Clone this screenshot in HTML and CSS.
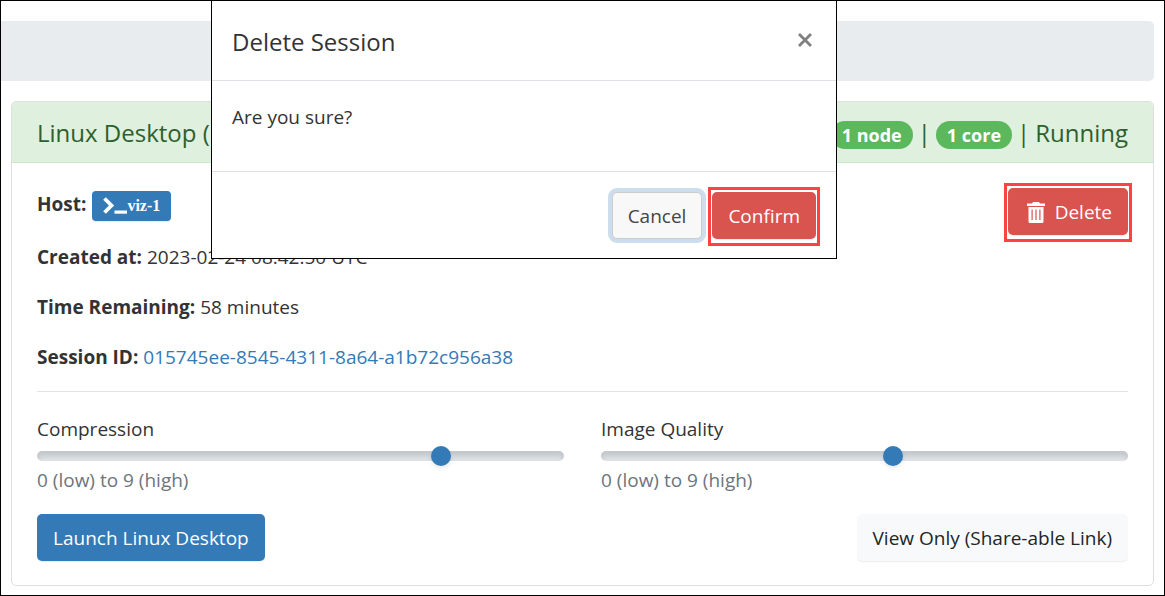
FILE: index.html
```html
<!DOCTYPE html>
<html lang="en">
<head>
<meta charset="utf-8">
<meta name="viewport" content="width=device-width, initial-scale=1">
<title>My Interactive Sessions</title>
<link rel="stylesheet" href="styles.css">
</head>
<body>
<main class="page">
  <nav class="breadcrumb" aria-label="Breadcrumb"></nav>
  <section class="card">
    <header class="card-header">
      <h2 class="card-title">Linux Desktop (</h2>
      <div class="card-status">
        <span class="badge">1 node</span>
        <span>|</span>
        <span class="badge">1 core</span>
        <span>|</span>
        <span>Running</span>
      </div>
    </header>
    <div class="card-body">
      <div class="session">
        <div class="details">
          <p class="host"><strong>Host:</strong>
            <a class="btn btn-primary btn-host" href="#"><svg class="icon-terminal" viewBox="0 0 24 18" aria-hidden="true"><path d="M1.500 1.500 8.500 8.500 1.500 15.500" fill="none" stroke="currentColor" stroke-width="3.800"/><path d="M11.500 13.500H24v3.200H11.500z" fill="currentColor"/></svg>viz-1</a>
          </p>
          <p><strong>Created at:</strong> 2023-02-24 08:42:50 UTC</p>
          <p><strong>Time Remaining:</strong> 58 minutes</p>
          <p><strong>Session ID:</strong> <a class="link" href="#">015745ee-8545-4311-8a64-a1b72c956a38</a></p>
        </div>
        <button class="btn btn-danger marked btn-delete" type="button"><svg class="icon-trash" viewBox="0 0 18 21" aria-hidden="true"><path d="M6 0h6l1 1.500h5V4H0V1.500h5z" fill="currentColor"/><path fill-rule="evenodd" d="M1.500 5h15v14.500q0 1.500-1.500 1.500H3q-1.500 0-1.500-1.500zM4.500 7.500v10.500h1.200V7.500zM8.400 7.500v10.500h1.200V7.500zM12.300 7.500v10.500h1.200V7.500z" fill="currentColor"/></svg>Delete</button>
      </div>
      <form class="settings">
        <div class="field">
          <label for="compression">Compression</label>
          <input class="range" id="compression" type="range" min="0" max="9" value="7">
          <small class="help">0 (low) to 9 (high)</small>
        </div>
        <div class="field">
          <label for="quality">Image Quality</label>
          <input class="range" id="quality" type="range" min="0" max="9" value="5">
          <small class="help">0 (low) to 9 (high)</small>
        </div>
      </form>
      <div class="actions">
        <button class="btn btn-primary" type="button">Launch Linux Desktop</button>
        <a class="btn btn-light" href="#">View Only (Share-able Link)</a>
      </div>
    </div>
  </section>
</main>
<div class="modal" role="dialog" aria-labelledby="modal-title">
  <header class="modal-header">
    <h3 class="modal-title" id="modal-title">Delete Session</h3>
    <button class="close" type="button" aria-label="Close"><svg viewBox="0 0 14 14" aria-hidden="true"><path d="M1 1l12 12M13 1 1 13" fill="none" stroke="currentColor" stroke-width="2.800"/></svg></button>
  </header>
  <div class="modal-body">Are you sure?</div>
  <footer class="modal-footer">
    <button class="btn btn-default" type="button">Cancel</button>
    <button class="btn btn-danger marked" type="button">Confirm</button>
  </footer>
</div>
</body>
</html>
```
FILE: styles.css
```css
* { box-sizing: border-box; }
body {
  margin: 0;
  color: #333;
  background: #fff;
  font: 19px/30px "Open Sans", "Noto Sans", sans-serif;
}
h2, h3, p { margin: 0; }
.page {
  min-height: 100vh;
  padding: 20px 10px 8px;
  border: 1px solid #000;
}
.breadcrumb {
  height: 60px;
  margin: 0 0 20px -10px;
  border-radius: 0 5px 5px 0;
  background: #e9ecef;
}
.card {
  border: 1px solid #dfdfdf;
  border-radius: 5px;
}
.card-header {
  display: flex;
  justify-content: space-between;
  align-items: baseline;
  padding: 16px 25px 13px;
  border-bottom: 1px solid #c8e6c8;
  border-radius: 4px 4px 0 0;
  background: #dff0de;
  color: #2d602d;
  font-size: 24px;
}
.card-title, .modal-title { font-size: 24px; font-weight: 500; }
.card-status { display: flex; align-items: baseline; gap: 5px; font-weight: 500; }
.badge {
  padding: 0 11px;
  border-radius: 14px;
  background: #5cb85c;
  color: #fff;
  font-size: 18px;
  line-height: 28px;
  font-weight: 700;
}
.card-body { padding: 25px 25px 24px; }
.session {
  display: flex;
  justify-content: space-between;
  align-items: flex-start;
  padding-bottom: 19px;
  border-bottom: 1px solid #e2e3e4;
}
.details { display: grid; gap: 20px; }
.host {
  display: flex;
  align-items: flex-start;
  gap: 6px;
  padding: 3px 0 1px;
  line-height: 26px;
}
.link { color: #337ab7; text-decoration: none; }
.btn {
  position: relative;
  display: inline-flex;
  align-items: center;
  justify-content: center;
  padding: 9px 15px 7px;
  border: 1px solid transparent;
  border-radius: 5px;
  font: inherit;
  line-height: 29px;
  text-decoration: none;
  white-space: nowrap;
  box-shadow: 0 1px 1px #00000013;
}
.btn-primary { background: #337ab7; color: #fff; }
.btn-danger { background: #d9534f; color: #fff; }
.btn-light { background: #f8f9fa; color: #212529; }
.btn-default {
  border-color: #ccc;
  background: #f8f8f8;
  color: #444;
  box-shadow: 0 0 0 4px #ccdeed;
}
.btn-host {
  padding: 4px 10px;
  border-radius: 4px;
  font: bold 16px/20px "Liberation Serif", serif;
}
.btn-delete { padding-left: 18px; }
.icon-terminal { width: 24px; height: 18px; }
.icon-trash { width: 18px; height: 21px; margin-right: 10px; }
.marked::after {
  content: "";
  position: absolute;
  inset: -6px -5px -8px;
  border: 3px solid #ff4343;
}
.settings {
  display: grid;
  grid-template-columns: 1fr 1fr;
  gap: 37px;
  padding-top: 22px;
}
.field { display: grid; }
.range {
  width: 100%;
  height: 24px;
  margin: 0;
  appearance: none;
  background: transparent;
}
.range::-webkit-slider-runnable-track {
  height: 10px;
  border-radius: 5px;
  background: #dee2e6;
  box-shadow: inset 0 5px 5px #0000001f;
}
.range::-webkit-slider-thumb {
  appearance: none;
  width: 20px;
  height: 20px;
  margin-top: -5px;
  border-radius: 50%;
  background: #337ab7;
  box-shadow: 0 2px 4px #0000001a;
}
.help { color: #6c757d; font-size: 19px; line-height: 24px; }
.actions {
  display: flex;
  justify-content: space-between;
  padding-top: 22px;
}
.modal {
  position: absolute;
  top: 0;
  left: 211px;
  width: 626px;
  border: 1px solid #000;
  background: #fff;
}
.modal-header {
  display: flex;
  align-items: flex-start;
  justify-content: space-between;
  padding: 25px 24px 23px 20px;
  border-bottom: 1px solid #dee2e6;
}
.modal-title { line-height: 31px; }
.close {
  display: flex;
  margin-top: 7px;
  padding: 0;
  border: 0;
  background: none;
  color: #7f7f7f;
}
.close svg { width: 14px; height: 14px; }
.modal-body { padding: 21px 20px 39px; }
.modal-footer {
  display: flex;
  justify-content: flex-end;
  gap: 10px;
  padding: 20px 20px 19px;
  border-top: 1px solid #dee2e6;
}
```
